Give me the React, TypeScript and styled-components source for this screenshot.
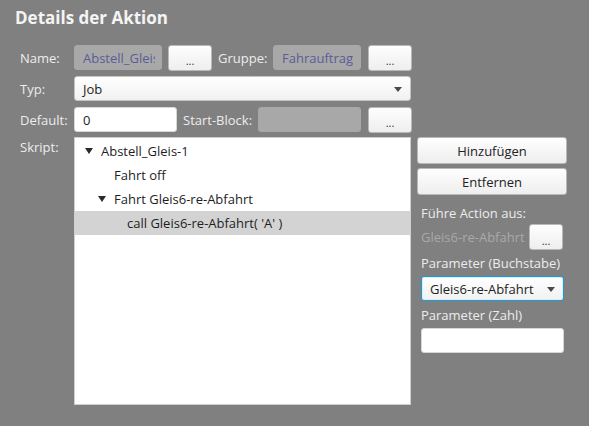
import styled, { createGlobalStyle } from "styled-components";

const GlobalStyle = createGlobalStyle`
  html, body {
    margin: 0;
    padding: 0;
    background: #808080;
  }
  body {
    font-family: "Open Sans", "Noto Sans", sans-serif;
    font-size: 13px;
    color: #ededed;
  }
`;

const Page = styled.div`
  width: 589px;
  height: 426px;
  box-sizing: border-box;
  padding: 4px 0 0 15px;
  overflow: hidden;
`;

const Title = styled.h1`
  margin: 0 0 14px 0;
  font-size: 17px;
  line-height: 27px;
  font-weight: 700;
  color: #f4f4f4;
`;

const Form = styled.div`
  padding-left: 5px;
  display: flex;
  flex-direction: column;
  gap: 6px;
`;

const Row = styled.div`
  display: flex;
  align-items: center;
  height: 25px;
`;

const Label = styled.span<{ $w: number; $ml?: number }>`
  width: ${(p) => p.$w}px;
  margin-left: ${(p) => p.$ml ?? 0}px;
  flex: none;
  white-space: nowrap;
  color: #ececec;
`;

const Field = styled.div<{ $w: number; $disabled?: boolean }>`
  width: ${(p) => p.$w}px;
  height: 25px;
  flex: none;
  box-sizing: border-box;
  padding: 0 6px 0 8px;
  display: flex;
  align-items: center;
  overflow: hidden;
  white-space: nowrap;
  border-radius: 3px;
  background: ${(p) => (p.$disabled ? "#a8a8a8" : "#ffffff")};
  color: ${(p) => (p.$disabled ? "#5b5c96" : "#222")};
  border: 1px solid ${(p) => (p.$disabled ? "#a8a8a8" : "#d8d8d8")};
`;

const FieldText = styled.span`
  display: block;
  overflow: hidden;
  max-width: 100%;
`;

const SmallButton = styled.button<{ $ml: number; $w?: number }>`
  margin-left: ${(p) => p.$ml}px;
  width: ${(p) => p.$w ?? 44}px;
  height: 26px;
  flex: none;
  box-sizing: border-box;
  border: 1px solid #b9b9b9;
  border-radius: 3px;
  background: linear-gradient(#fefefe, #eeeeee);
  font-family: inherit;
  font-size: 11px;
  color: #333;
  padding: 6px 0 0 0;
  line-height: 1;
`;

const Combo = styled.div<{ $w: number; $focus?: boolean }>`
  width: ${(p) => p.$w}px;
  height: 25px;
  flex: none;
  box-sizing: border-box;
  display: flex;
  align-items: center;
  justify-content: space-between;
  padding: 0 8px 0 8px;
  border-radius: 3px;
  color: #222;
  background: linear-gradient(#ffffff, #f1f1f1);
  border: 1px solid ${(p) => (p.$focus ? "#1e9ad6" : "#c4c4c4")};
  box-shadow: ${(p) => (p.$focus ? "inset 0 0 0 1px #d8eef9" : "none")};
`;

const Arrow = styled.span`
  width: 0;
  height: 0;
  margin-top: 1px;
  border-left: 4px solid transparent;
  border-right: 4px solid transparent;
  border-top: 5px solid #4a4a4a;
`;

const Main = styled.div`
  display: flex;
  align-items: flex-start;
  margin-top: -1px;
`;

const ScriptLabel = styled(Label)`
  padding-top: 1px;
  line-height: 18px;
`;

const Tree = styled.div`
  width: 337px;
  height: 268px;
  flex: none;
  box-sizing: border-box;
  background: #ffffff;
  border: 1px solid #cfcfcf;
  padding-top: 1px;
`;

const TreeRow = styled.div<{ $indent: number; $selected?: boolean }>`
  height: 24px;
  display: flex;
  align-items: center;
  padding-left: ${(p) => p.$indent}px;
  background: ${(p) => (p.$selected ? "#d3d3d3" : "transparent")};
  color: #1e1e1e;
  white-space: nowrap;
`;

const Toggle = styled.span`
  width: 16px;
  flex: none;
  display: flex;
  align-items: center;
  &::before {
    content: "";
    border-left: 4px solid transparent;
    border-right: 4px solid transparent;
    border-top: 6px solid #2a2a2a;
  }
`;

const Side = styled.div`
  margin-left: 6px;
  width: 150px;
  display: flex;
  flex-direction: column;
`;

const WideButton = styled.button`
  height: 27px;
  box-sizing: border-box;
  border: 1px solid #b9b9b9;
  border-radius: 3px;
  background: linear-gradient(#fefefe, #eeeeee);
  font-family: inherit;
  font-size: 13px;
  color: #222;
  margin-bottom: 4px;
`;

const SideText = styled.div<{ $mt: number }>`
  margin-top: ${(p) => p.$mt}px;
  padding-left: 4px;
  color: #ececec;
  white-space: nowrap;
`;

const SideRow = styled.div<{ $mt: number }>`
  margin-top: ${(p) => p.$mt}px;
  padding-left: 4px;
  display: flex;
  align-items: center;
`;

const Muted = styled.span`
  color: #a9a9a9;
  width: 108px;
  white-space: nowrap;
`;

export default function App() {
  return (
    <>
      <GlobalStyle />
      <Page>
        <Title>Details der Aktion</Title>
        <Form>
          <Row>
            <Label $w={54}>Name:</Label>
            <Field $w={88} $disabled>
              <FieldText>Abstell_Gleis-1</FieldText>
            </Field>
            <SmallButton $ml={6}>...</SmallButton>
            <Label $w={55} $ml={6}>Gruppe:</Label>
            <Field $w={88} $disabled>
              <FieldText>Fahrauftrag</FieldText>
            </Field>
            <SmallButton $ml={7}>...</SmallButton>
          </Row>
          <Row>
            <Label $w={54}>Typ:</Label>
            <Combo $w={337}>
              Job
              <Arrow />
            </Combo>
          </Row>
          <Row>
            <Label $w={54}>Default:</Label>
            <Field $w={103}>0</Field>
            <Label $w={75} $ml={6}>Start-Block:</Label>
            <Field $w={103} $disabled />
            <SmallButton $ml={7}>...</SmallButton>
          </Row>
          <Main>
            <ScriptLabel $w={54}>Skript:</ScriptLabel>
            <Tree>
              <TreeRow $indent={10}>
                <Toggle />
                Abstell_Gleis-1
              </TreeRow>
              <TreeRow $indent={39}>Fahrt off</TreeRow>
              <TreeRow $indent={23}>
                <Toggle />
                Fahrt Gleis6-re-Abfahrt
              </TreeRow>
              <TreeRow $indent={52} $selected>
                call Gleis6-re-Abfahrt( 'A' )
              </TreeRow>
            </Tree>
            <Side>
              <WideButton>Hinzufügen</WideButton>
              <WideButton>Entfernen</WideButton>
              <SideText $mt={5}>Führe Action aus:</SideText>
              <SideRow $mt={2}>
                <Muted>Gleis6-re-Abfahrt</Muted>
                <SmallButton $ml={0} $w={34}>...</SmallButton>
              </SideRow>
              <SideText $mt={4}>Parameter (Buchstabe)</SideText>
              <SideRow $mt={4}>
                <Combo $w={143} $focus>
                  Gleis6-re-Abfahrt
                  <Arrow />
                </Combo>
              </SideRow>
              <SideText $mt={5}>Parameter (Zahl)</SideText>
              <SideRow $mt={4}>
                <Field $w={143} />
              </SideRow>
            </Side>
          </Main>
        </Form>
      </Page>
    </>
  );
}
